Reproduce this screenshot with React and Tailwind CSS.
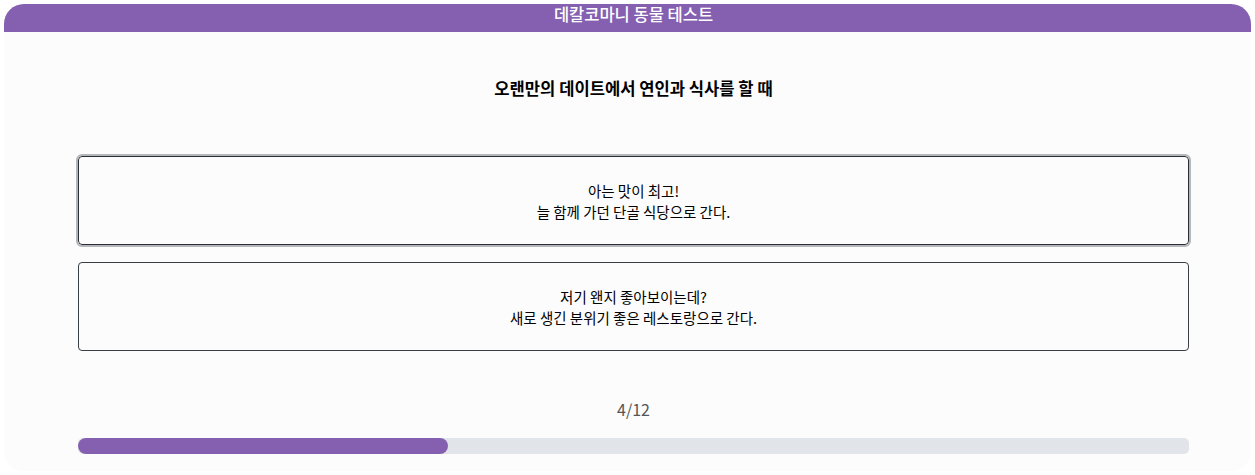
export default function App() {
  const font = { fontFamily: '"Noto Sans CJK KR", "Noto Sans", sans-serif' };
  return (
    <div className="bg-white w-[1255px] h-[475px] p-1" style={font}>
      <div className="bg-[#fcfcfc] rounded-[20px] h-[467px] flex flex-col">
        <div className="h-7 bg-[#8560b0] rounded-t-[20px] flex justify-center items-start pl-[12px] shrink-0">
          <span className="text-white text-[16.5px] font-medium leading-[21px]">데칼코마니 동물 테스트</span>
        </div>
        <div className="flex flex-col pl-[74px] pr-[62px]">
          <div className="mt-[44px] text-center text-[16.6px] font-bold leading-6 text-black">
            오랜만의 데이트에서 연인과 식사를 할 때
          </div>
          <div className="mt-[56px] flex flex-col gap-[17px]">
            <button className="h-[89px] w-full rounded-[4px] border border-[#2a2e33] bg-[#fcfcfc] outline-2 outline-offset-0 outline-[#b3b6ba] text-[14.5px] leading-[21px] text-black">
              아는 맛이 최고!
              <br />
              늘 함께 가던 단골 식당으로 간다.
            </button>
            <button className="h-[89px] w-full rounded-[4px] border border-[#3a3f45] bg-[#fcfcfc] text-[14.5px] leading-[21px] text-black">
              저기 왠지 좋아보이는데?
              <br />
              새로 생긴 분위기 좋은 레스토랑으로 간다.
            </button>
          </div>
          <div className="mt-[46px] text-center text-[16px] leading-6 text-[#555]">4/12</div>
          <div className="mt-[17px] h-4 w-full rounded-[5px] bg-[#e1e4e8] overflow-hidden">
            <div className="h-4 rounded-[8px] bg-[#8560b0]" style={{ width: `${(4 / 12) * 100}%` }} />
          </div>
        </div>
      </div>
    </div>
  );
}
